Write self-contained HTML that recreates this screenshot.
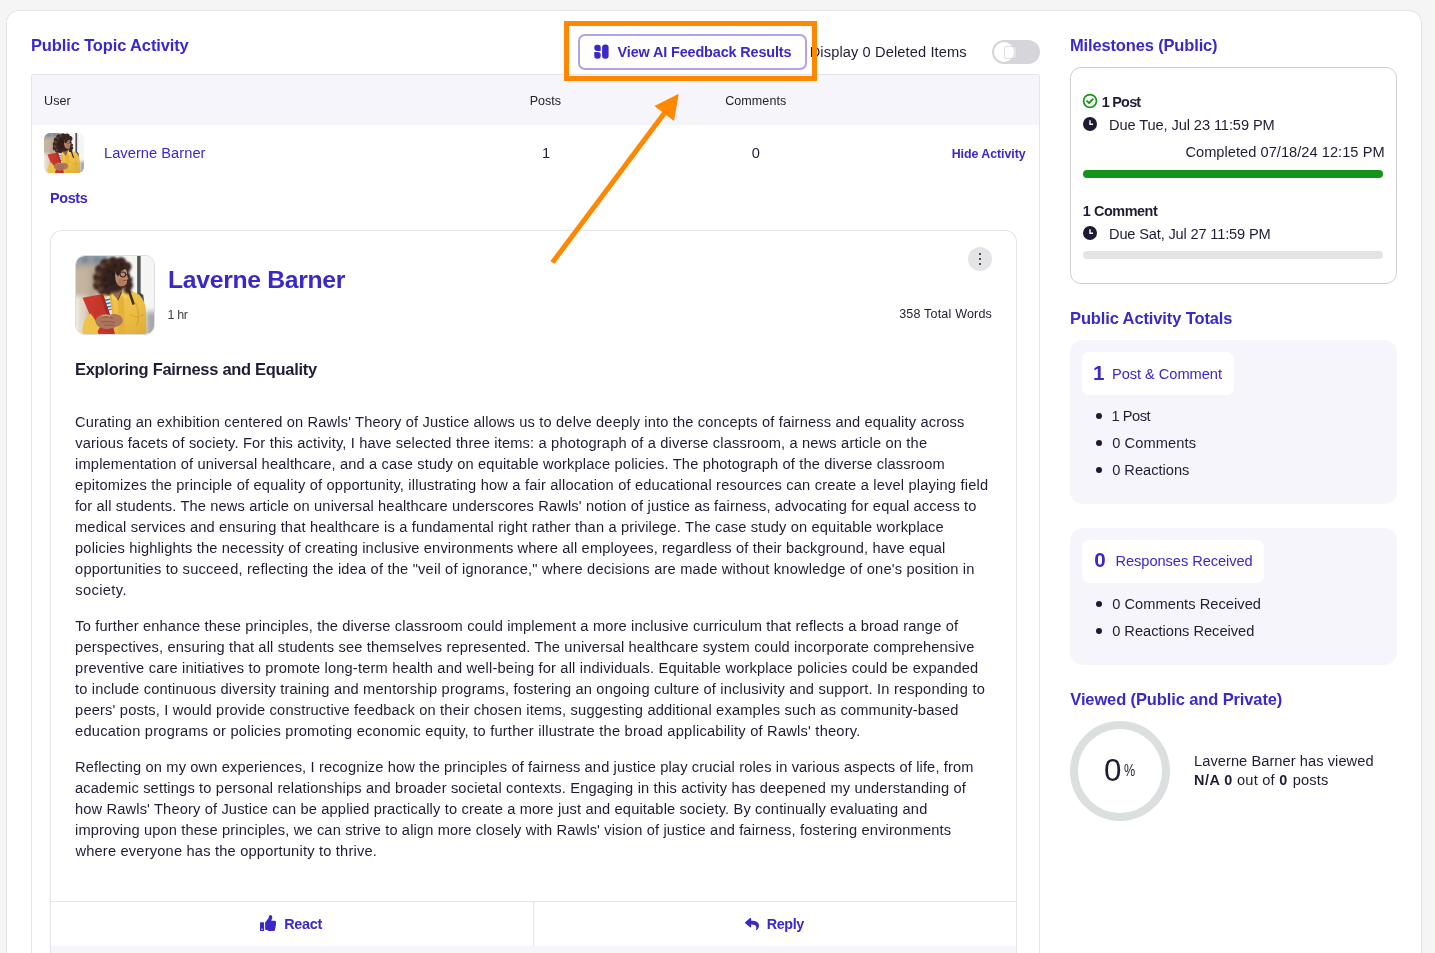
<!DOCTYPE html>
<html lang="en"><head><meta charset="utf-8"><title>Public Topic Activity</title>
<style>
html,body{margin:0;padding:0}
html{overflow:hidden;width:1435px;height:953px}
body{width:1435px;height:953px;overflow:hidden;position:relative;background:#f5f5f5;font-family:"Liberation Sans",sans-serif;color:#1f1d36}
.abs{position:absolute;display:block}
.t{position:absolute;white-space:pre;margin:0;padding:0;font-weight:400;font-style:normal;text-decoration:none;list-style:none;display:block}
.txt h2,.txt h3,.txt h4,.txt p,.txt ul,.txt li,.txt header,.txt footer{margin:0;padding:0;font:inherit;list-style:none}
.txt button{all:unset}
.txt{position:absolute;left:0;top:0;width:1435px;height:953px;z-index:2;will-change:transform}
.card{position:absolute;left:6px;top:10px;width:1416px;height:943px;background:#fff;border:1px solid #e4e4e8;border-bottom:0;border-radius:13px 13px 0 0;box-sizing:border-box}
.btn{position:absolute;left:578px;top:34px;width:228.6px;height:36px;box-sizing:border-box;border:2px solid #aca3e8;border-radius:7px;background:#fff}
.toggle{position:absolute;left:992px;top:40px;width:48px;height:24px;border-radius:12px;background:#d6d5da}
.toggle i{position:absolute;left:2px;top:2px;width:20px;height:20px;border-radius:50%;background:#fff}
.toggle b{position:absolute;left:12px;top:6px;width:13px;height:13px;border:1px solid rgba(190,190,198,.45);border-radius:2.5px;background:rgba(250,250,250,.35);box-sizing:border-box}
.table{position:absolute;left:31px;top:74px;width:1009px;height:879px;box-sizing:border-box;border:1px solid #e4e4ea;border-bottom:0;border-radius:3px 3px 0 0;background:#fff}
.thead{position:absolute;left:32px;top:75px;width:1007px;height:49.6px;background:#f6f5fc}
.post{position:absolute;left:50px;top:230px;width:967px;height:723px;box-sizing:border-box;border:1px solid #e3e3e7;border-bottom:0;border-radius:12px 12px 0 0;background:#fff}
.postfoot{position:absolute;left:51px;top:945.6px;width:965px;height:7.4px;background:#f6f5fc}
.hline{position:absolute;left:51px;top:901px;width:965px;height:1px;background:#e4e4e7}
.vline{position:absolute;left:533px;top:901px;width:1px;height:45px;background:#e4e4e7}
.avb{position:absolute;left:75px;top:255px;width:80px;height:80px;box-sizing:border-box;border:1px solid #dcdce2;border-radius:10px;background:#fff}
.kebab{position:absolute;left:968px;top:247px;width:24px;height:24px;border-radius:50%;background:#e4e4e7}
.kebab i{position:absolute;left:10.8px;width:2.4px;height:2.4px;border-radius:50%;background:#1d1a33}
.msbox{position:absolute;left:1070px;top:67px;width:327px;height:216.5px;box-sizing:border-box;border:1px solid #cfcfd6;border-radius:11px;background:#fff}
.bar{position:absolute;left:1083px;width:300px;height:8px;border-radius:4px}
.lav{position:absolute;left:1070px;width:327px;background:#f6f5fc;border-radius:13px}
.chip{position:absolute;left:1082px;height:42.6px;background:#fff;border-radius:7px}
.dot{position:absolute;left:1095.6px;width:6px;height:6px;border-radius:50%;background:#1d1a33}
.ring{position:absolute;left:1070px;top:721px;width:100px;height:100px;box-sizing:border-box;border:8px solid #dcdfdf;border-radius:50%}
</style></head>
<body>
<svg width="0" height="0" style="position:absolute"><symbol id="av" viewBox="0 0 80 80">
<defs><filter id="bl" x="-10%" y="-10%" width="120%" height="120%"><feGaussianBlur stdDeviation="0.5"/></filter>
<filter id="bl2" x="-10%" y="-10%" width="120%" height="120%"><feGaussianBlur stdDeviation="2"/></filter>
<filter id="bl3" x="-10%" y="-10%" width="120%" height="120%"><feGaussianBlur stdDeviation="1"/></filter>
<linearGradient id="sh" x1="0" y1="0" x2="1" y2="1"><stop offset="0" stop-color="#f4c94f"/><stop offset=".6" stop-color="#eebf45"/><stop offset="1" stop-color="#dba935"/></linearGradient>
<linearGradient id="rd" x1="0" y1="0" x2="1" y2="0"><stop offset="0" stop-color="#d03b2f"/><stop offset="1" stop-color="#bd3028"/></linearGradient>
<radialGradient id="hr" cx=".55" cy=".5" r=".6"><stop offset="0" stop-color="#2a1d1a"/><stop offset=".7" stop-color="#3a2820"/><stop offset="1" stop-color="#5e4133"/></radialGradient>
<clipPath id="avc"><rect x="0" y="0" width="80" height="80" rx="9"/></clipPath></defs>
<g clip-path="url(#avc)">
<rect width="80" height="80" fill="#f5f5f4"/>
<g filter="url(#bl2)">
<rect x="-6" y="-6" width="29" height="92" fill="#c4b5a0"/>
<rect x="-6" y="-6" width="40" height="15.5" fill="#939daa"/>
<rect x="7" y="1" width="5" height="6" fill="#6f7986"/><rect x="19" y="1" width="5" height="6" fill="#6f7986"/>
<rect x="-6" y="9" width="30" height="5" fill="#b9ab97"/>
<rect x="13" y="14" width="10" height="28" fill="#b5a692"/>
<rect x="-6" y="41" width="17" height="45" fill="#e2d8c8"/>
<rect x="-6" y="41" width="8" height="45" fill="#f3efe8"/>
<rect x="72" y="57" width="14" height="30" fill="#a6aaae"/>
<rect x="72" y="55" width="14" height="3" fill="#d6d8da"/>
</g>
<g filter="url(#bl)">
<rect x="62.7" y="-2" width="3.6" height="42" fill="#55545b"/>
<path d="M64.5 37 L69 40 L70 48 L65.5 47 Z" fill="#47474e"/>
<path d="M7 84 C6 70 9 62 16 58 L24 47 L29 39 L40 34 L52 34 C58 36 63 38 65 40 C70 45 72 52 72 60 L72.3 84 Z" fill="url(#sh)"/>
<path d="M43 42 L49 40 L50.5 84 L43.5 84 Z" fill="#e1ad36" opacity=".75"/>
<path d="M61 48 C65 56 65 66 62 71 M55 60 C60 63 66 63 70 60 M12 66 C16 64 20 66 22 70" fill="none" stroke="#d39c2b" stroke-width="1.4" opacity=".65"/>
<path d="M29 39 L36 36 L42 45 L35 44 Z M52 34 L57 38 L50 44 L47 40 Z" fill="#f6cf5c"/>
<path d="M54.6 36.5 L58.8 48.7" stroke="#3a3231" stroke-width="2.6" stroke-linecap="round"/>
<path d="M36 30 L47 29 L47 38 L43 45 L37 38 Z" fill="#9c6a52"/>
<path d="M46.5 37 L43 45.5" stroke="#3b2f2c" stroke-width=".8"/>
</g>
<g filter="url(#bl3)">
<g fill="url(#hr)">
<ellipse cx="38" cy="20" rx="17" ry="17.5"/>
</g>
<g fill="#3a2820">
<circle cx="25" cy="14" r="5.5"/><circle cx="30" cy="8" r="5.5"/><circle cx="38" cy="5.5" r="5"/><circle cx="46" cy="6.5" r="5.5"/><circle cx="52" cy="11" r="5"/>
<circle cx="22.5" cy="22" r="5"/><circle cx="23" cy="30" r="5.5"/><circle cx="27" cy="35" r="5"/><circle cx="33" cy="36.5" r="4"/>
<circle cx="54.5" cy="30" r="4"/><circle cx="53" cy="35" r="3.6"/><circle cx="55.5" cy="24" r="2.6"/>
</g>
<g fill="#6a4937" opacity=".75"><circle cx="23" cy="18" r="3"/><circle cx="22" cy="27" r="3"/><circle cx="27" cy="10" r="2.6"/><circle cx="25" cy="34" r="2.6"/><circle cx="33" cy="6" r="2"/></g>
</g>
<g filter="url(#bl)">
<g fill="#2a1d1a" opacity=".8"><circle cx="34" cy="16" r="2.4"/><circle cx="30" cy="24" r="2.4"/><circle cx="36" cy="28" r="2.4"/><circle cx="40" cy="10" r="2.2"/><circle cx="31" cy="31" r="2"/><circle cx="47" cy="9" r="2"/></g>
<path d="M41 15 C43 10.5 50.5 10.5 52 15.5 L52.6 20.5 L53.8 23.5 L52.4 24.3 L52 28 C50 31.5 45.5 32 43 29.5 C40 26 39.5 19 41 15 Z" fill="#c08a6c"/>
<path d="M46 22 C48 25 50 27 52 27.5 L52 28 C50 31.5 45.5 32 43 29.5 C42 27 43 24 46 22 Z" fill="#b27b60"/>
<path d="M40.5 16 C42 11 48 9.5 52 13 C48 13.5 45 16 43.5 21 C42 20 40.5 18 40.5 16 Z" fill="#33231e"/>
<path d="M41 18 L45 18.3 M45 18.3 C45 22.2 50.6 22.6 51 19 C51 15.8 45 15.6 45 18.3 M51 19 L54.6 19.4 M54.6 19.4 C54.8 21 54 22 53 22" fill="none" stroke="#2b2322" stroke-width="1.1"/>
<path d="M48.4 24.6 C49.4 25.2 50.8 25.1 51.8 24.4" stroke="#a2423f" stroke-width="1.1" fill="none"/>
<path d="M29 42 L34.5 41 L37.4 60.5 L33.5 62 Z" fill="#e8ecf1"/>
<path d="M29.8 45.4 L35 44.4 M30.6 49 L35.6 48 M31.4 52.6 L36.2 51.6" stroke="#3577bd" stroke-width="1.5"/>
<path d="M31.8 55.6 L36.6 54.6" stroke="#c9372f" stroke-width="1.2"/>
<path d="M34.5 41 L36.6 41 L39.4 60.5 L37.4 60.5 Z" fill="#e9b52c"/>
<path d="M6.7 42.9 L27.7 39 L34.9 60.5 L41 84 L25 84 L16 64.7 Z" fill="url(#rd)"/>
<path d="M24.6 39.6 L27.7 39 L34.9 60.5 L32 61 Z" fill="#a92a23"/>
<path d="M7 84 C6 72 9 63 15 59 C18 63 21 68 24.5 73 C22 77 21 80 21 84 Z" fill="#efc248"/>
<path d="M20 66 C22 60 29 58.5 34 60.5 C39 58 47.5 60 48 66 C48 71 41 74 32 75 C25 75 19.5 71 20 66 Z" fill="#ad765e"/>
<path d="M27 63.5 C31 61.5 36 62.5 38 64.5 M26 67.5 C31 66.5 37 67.5 40 68.5 M29 71 C33 70.5 37 71 39 71.6" fill="none" stroke="#8a5644" stroke-width=".9"/>
<path d="M27 61.5 C30 60.3 33 60.6 35 61.6" stroke="#d2a088" stroke-width="1.3" fill="none"/>
</g>
</g>
</symbol></svg>

<div class="card"></div>
<!-- left column : topic activity -->
<div class="btn"></div>
<svg class="abs" style="left:594px;top:44px" width="15" height="16" viewBox="0 0 15 16"><path d="M0.3 3.6 a2.8 2.8 0 0 1 2.8 -2.8 h0.8 a2.8 2.8 0 0 1 2.8 2.8 v3.3 h-3.6 a2.8 2.8 0 0 1 -2.8 -2.8 z" fill="#3a28c8"/><path d="M0.3 7.9 h3.6 a2.8 2.8 0 0 1 2.8 2.8 v1.3 a2.8 2.8 0 0 1 -2.8 2.8 h-0.8 a2.8 2.8 0 0 1 -2.8 -2.8 z" fill="#3a28c8"/><rect x="8.1" y="0.5" width="6.5" height="14.3" rx="3" fill="#3a28c8"/></svg>
<div class="toggle"><i></i><b></b></div>
<div class="table"></div>
<div class="thead"></div>
<svg class="abs" style="left:44px;top:133px;border-radius:6px" width="40" height="40"><use href="#av"/></svg>
<div class="post"></div>
<div class="postfoot"></div>
<div class="hline"></div><div class="vline"></div>
<div class="avb"></div>
<svg class="abs" style="left:76px;top:256px" width="78" height="78"><use href="#av"/></svg>
<div class="kebab"><i style="top:6px"></i><i style="top:11px"></i><i style="top:16px"></i></div>
<svg class="abs" style="left:260px;top:914.6px" width="16.4" height="16.4" viewBox="0 0 512 512"><path fill="#3a28c8" d="M104 224H24c-13.255 0-24 10.745-24 24v240c0 13.255 10.745 24 24 24h80c13.255 0 24-10.745 24-24V248c0-13.255-10.745-24-24-24zM64 472c-13.255 0-24-10.745-24-24s10.745-24 24-24 24 10.745 24 24-10.745 24-24 24zM384 81.452c0 42.416-25.97 66.208-33.277 94.548h101.723c33.397 0 59.397 27.746 59.553 58.098.084 17.938-7.546 37.249-19.439 49.197l-.11.11c9.836 23.337 8.237 56.037-9.308 79.469 8.681 25.895-.069 57.704-16.382 74.757 4.298 17.598 2.244 32.575-6.148 44.632C440.202 511.587 389.616 512 346.839 512l-2.845-.001c-48.287-.017-87.806-17.598-119.56-31.725-15.957-7.099-36.821-15.887-52.651-16.178-6.54-.12-11.783-5.457-11.783-11.998v-213.77c0-3.2 1.282-6.271 3.558-8.521 39.614-39.144 56.648-80.587 89.117-113.111 14.804-14.832 20.188-37.236 25.393-58.902C282.515 39.293 291.817 0 312 0c24 0 72 8 72 81.452z"/></svg>
<svg class="abs" style="left:745px;top:916.8px" width="14" height="14" viewBox="0 0 512 512"><path fill="#3a28c8" d="M8.309 189.836L184.313 37.851C199.719 24.546 224 35.347 224 56.015v80.053c160.629 1.839 288 34.032 288 186.258 0 61.441-39.581 122.309-83.333 154.132-13.653 9.931-33.111-2.533-28.077-18.631 45.344-145.012-21.507-183.51-176.59-185.742V360c0 20.7-24.3 31.453-39.687 18.164l-176.004-152c-11.071-9.562-11.086-26.753 0-36.328z"/></svg>
<!-- right column -->
<div class="msbox"></div>
<svg class="abs" style="left:1082px;top:92.8px" width="16" height="16" viewBox="0 0 16 16"><circle cx="8" cy="8" r="6.4" fill="none" stroke="#15961a" stroke-width="1.7"/><path d="M5.1 8.1 L7.1 10 L10.9 6.2" fill="none" stroke="#15961a" stroke-width="1.9" stroke-linecap="round" stroke-linejoin="round"/></svg>
<svg class="abs" style="left:1083px;top:117px" width="14" height="14" viewBox="0 0 14 14"><circle cx="7" cy="7" r="7" fill="#1d1a33"/><path d="M7 3.2 V7.3 H10" fill="none" stroke="#fff" stroke-width="1.4"/></svg>
<svg class="abs" style="left:1083px;top:226px" width="14" height="14" viewBox="0 0 14 14"><circle cx="7" cy="7" r="7" fill="#1d1a33"/><path d="M7 3.2 V7.3 H10" fill="none" stroke="#fff" stroke-width="1.4"/></svg>
<div class="bar" style="top:170px;background:#14921a"></div>
<div class="bar" style="top:251px;background:#e4e4e7"></div>
<div class="lav" style="top:340px;height:163.5px"></div>
<div class="lav" style="top:528px;height:136.5px"></div>
<div class="chip" style="top:352px;width:152px"></div>
<div class="chip" style="top:540px;width:182px"></div>
<i class="dot" style="top:413.4px"></i><i class="dot" style="top:440.4px"></i><i class="dot" style="top:467.4px"></i>
<i class="dot" style="top:601.4px"></i><i class="dot" style="top:628.4px"></i>
<div class="ring"></div>

<div class="txt">
<main>
<section class="activity" aria-label="Public Topic Activity">
<header><h2 class="t" style="left:31.0px;top:35px;font-size:16.48px;line-height:20px;letter-spacing:-0.120px;color:#3a28c8;font-weight:700;">Public Topic Activity</h2>
<button type="button"><span class="t" style="left:617.6px;top:43px;font-size:14.42px;line-height:18px;letter-spacing:-0.131px;color:#3a28c8;font-weight:700;">View AI Feedback Results</span></button>
<label><span class="t" style="left:809.7px;top:43px;font-size:14.63px;line-height:18px;letter-spacing:0.114px;color:#1f1d36;">Display 0 Deleted Items</span></label></header>

<div role="table"><div role="row"><span class="t" style="left:44.1px;top:93px;font-size:12.54px;line-height:16px;letter-spacing:0.064px;color:#23232b;">User</span>
<span class="t" style="left:529.7px;top:93px;font-size:12.54px;line-height:16px;letter-spacing:-0.015px;color:#23232b;">Posts</span>
<span class="t" style="left:725.2px;top:93px;font-size:12.54px;line-height:16px;letter-spacing:0.066px;color:#23232b;">Comments</span></div>

<div role="row"><a class="t" style="left:104.0px;top:144px;font-size:14.63px;line-height:18px;letter-spacing:0.050px;color:#3a28c8;">Laverne Barner</a>
<span class="t" style="left:542.1px;top:144px;font-size:14.63px;line-height:18px;letter-spacing:0.000px;color:#1f1d36;">1</span>
<span class="t" style="left:751.7px;top:144px;font-size:14.63px;line-height:18px;letter-spacing:0.000px;color:#1f1d36;">0</span>
<a class="t" style="left:951.7px;top:146px;font-size:12.36px;line-height:16px;letter-spacing:-0.037px;color:#3a28c8;font-weight:700;">Hide Activity</a></div></div>
<h3 class="t" style="left:50.0px;top:189px;font-size:14.42px;line-height:18px;letter-spacing:-0.377px;color:#3a28c8;font-weight:700;">Posts</h3>

<article class="postbody"><header><h3 class="t" style="left:168.1px;top:265px;font-size:24.72px;line-height:29px;letter-spacing:-0.323px;color:#3a28c8;font-weight:700;">Laverne Barner</h3>
<time class="t" style="left:167.6px;top:307px;font-size:12.54px;line-height:16px;letter-spacing:-0.417px;color:#3f3f46;">1 hr</time>
<span class="t" style="left:899.2px;top:306px;font-size:12.54px;line-height:16px;letter-spacing:0.183px;color:#1f1d36;">358 Total Words</span></header>
<h4 class="t" style="left:75.0px;top:359px;font-size:16.48px;line-height:20px;letter-spacing:-0.287px;color:#1f1d36;font-weight:700;">Exploring Fairness and Equality</h4>

<p><span class="t" style="left:75.0px;top:413px;font-size:14.63px;line-height:18px;letter-spacing:0.163px;color:#1f1d36;">Curating an exhibition centered on Rawls&#x27; Theory of Justice allows us to delve deeply into the concepts of fairness and equality across</span>
<span class="t" style="left:75.3px;top:434px;font-size:14.63px;line-height:18px;letter-spacing:0.169px;color:#1f1d36;">various facets of society. For this activity, I have selected three items: a photograph of a diverse classroom, a news article on the</span>
<span class="t" style="left:75.1px;top:455px;font-size:14.63px;line-height:18px;letter-spacing:0.158px;color:#1f1d36;">implementation of universal healthcare, and a case study on equitable workplace policies. The photograph of the diverse classroom</span>
<span class="t" style="left:75.1px;top:476px;font-size:14.63px;line-height:18px;letter-spacing:0.188px;color:#1f1d36;">epitomizes the principle of equality of opportunity, illustrating how a fair allocation of educational resources can create a level playing field</span>
<span class="t" style="left:74.9px;top:497px;font-size:14.63px;line-height:18px;letter-spacing:0.141px;color:#1f1d36;">for all students. The news article on universal healthcare underscores Rawls&#x27; notion of justice as fairness, advocating for equal access to</span>
<span class="t" style="left:75.0px;top:518px;font-size:14.63px;line-height:18px;letter-spacing:0.162px;color:#1f1d36;">medical services and ensuring that healthcare is a fundamental right rather than a privilege. The case study on equitable workplace</span>
<span class="t" style="left:75.1px;top:539px;font-size:14.63px;line-height:18px;letter-spacing:0.145px;color:#1f1d36;">policies highlights the necessity of creating inclusive environments where all employees, regardless of their background, have equal</span>
<span class="t" style="left:75.1px;top:560px;font-size:14.63px;line-height:18px;letter-spacing:0.203px;color:#1f1d36;">opportunities to succeed, reflecting the idea of the &quot;veil of ignorance,&quot; where decisions are made without knowledge of one&#x27;s position in</span>
<span class="t" style="left:75.2px;top:581px;font-size:14.63px;line-height:18px;letter-spacing:0.394px;color:#1f1d36;">society.</span></p>

<p><span class="t" style="left:75.3px;top:617px;font-size:14.63px;line-height:18px;letter-spacing:0.166px;color:#1f1d36;">To further enhance these principles, the diverse classroom could implement a more inclusive curriculum that reflects a broad range of</span>
<span class="t" style="left:75.1px;top:638px;font-size:14.63px;line-height:18px;letter-spacing:0.158px;color:#1f1d36;">perspectives, ensuring that all students see themselves represented. The universal healthcare system could incorporate comprehensive</span>
<span class="t" style="left:75.1px;top:659px;font-size:14.63px;line-height:18px;letter-spacing:0.183px;color:#1f1d36;">preventive care initiatives to promote long-term health and well-being for all individuals. Equitable workplace policies could be expanded</span>
<span class="t" style="left:74.9px;top:680px;font-size:14.63px;line-height:18px;letter-spacing:0.190px;color:#1f1d36;">to include continuous diversity training and mentorship programs, fostering an ongoing culture of inclusivity and support. In responding to</span>
<span class="t" style="left:75.1px;top:701px;font-size:14.63px;line-height:18px;letter-spacing:0.185px;color:#1f1d36;">peers&#x27; posts, I would provide constructive feedback on their chosen items, suggesting additional examples such as community-based</span>
<span class="t" style="left:75.1px;top:722px;font-size:14.63px;line-height:18px;letter-spacing:0.225px;color:#1f1d36;">education programs or policies promoting economic equity, to further illustrate the broad applicability of Rawls&#x27; theory.</span></p>

<p><span class="t" style="left:75.0px;top:758px;font-size:14.63px;line-height:18px;letter-spacing:0.136px;color:#1f1d36;">Reflecting on my own experiences, I recognize how the principles of fairness and justice play crucial roles in various aspects of life, from</span>
<span class="t" style="left:75.0px;top:779px;font-size:14.63px;line-height:18px;letter-spacing:0.165px;color:#1f1d36;">academic settings to personal relationships and broader societal contexts. Engaging in this activity has deepened my understanding of</span>
<span class="t" style="left:75.0px;top:800px;font-size:14.63px;line-height:18px;letter-spacing:0.155px;color:#1f1d36;">how Rawls&#x27; Theory of Justice can be applied practically to create a more just and equitable society. By continually evaluating and</span>
<span class="t" style="left:75.1px;top:821px;font-size:14.63px;line-height:18px;letter-spacing:0.146px;color:#1f1d36;">improving upon these principles, we can strive to align more closely with Rawls&#x27; vision of justice and fairness, fostering environments</span>
<span class="t" style="left:75.4px;top:842px;font-size:14.63px;line-height:18px;letter-spacing:0.199px;color:#1f1d36;">where everyone has the opportunity to thrive.</span></p>

<footer><button type="button"><span class="t" style="left:284.2px;top:915px;font-size:14.42px;line-height:18px;letter-spacing:-0.266px;color:#3a28c8;font-weight:700;">React</span></button>
<button type="button"><span class="t" style="left:766.7px;top:915px;font-size:14.42px;line-height:18px;letter-spacing:-0.399px;color:#3a28c8;font-weight:700;">Reply</span></button></footer></article>
</section>

<aside>
<section aria-label="Milestones"><h2 class="t" style="left:1070.0px;top:35px;font-size:16.48px;line-height:20px;letter-spacing:-0.139px;color:#3a28c8;font-weight:700;">Milestones (Public)</h2>
<ul><li><strong class="t" style="left:1101.8px;top:93px;font-size:14.42px;line-height:18px;letter-spacing:-0.773px;color:#1f1d36;font-weight:700;">1 Post</strong>
<span class="t" style="left:1109.0px;top:116px;font-size:14.63px;line-height:18px;letter-spacing:-0.100px;color:#1f1d36;">Due Tue, Jul 23 11:59 PM</span>
<span class="t" style="left:1185.4px;top:143px;font-size:14.63px;line-height:18px;letter-spacing:0.032px;color:#1f1d36;">Completed 07/18/24 12:15 PM</span></li>
<li><strong class="t" style="left:1082.8px;top:202px;font-size:14.42px;line-height:18px;letter-spacing:-0.434px;color:#1f1d36;font-weight:700;">1 Comment</strong>
<span class="t" style="left:1109.0px;top:225px;font-size:14.63px;line-height:18px;letter-spacing:-0.168px;color:#1f1d36;">Due Sat, Jul 27 11:59 PM</span></li></ul></section>

<section aria-label="Public Activity Totals"><h2 class="t" style="left:1070.0px;top:308px;font-size:16.48px;line-height:20px;letter-spacing:-0.108px;color:#3a28c8;font-weight:700;">Public Activity Totals</h2>
<div><strong class="t" style="left:1093.1px;top:360px;font-size:20.60px;line-height:25px;letter-spacing:0.000px;color:#3a28c8;font-weight:700;">1</strong>
<span class="t" style="left:1112.0px;top:365px;font-size:14.63px;line-height:18px;letter-spacing:-0.045px;color:#3a28c8;">Post &amp; Comment</span>
<ul><li class="t" style="left:1111.5px;top:407px;font-size:14.63px;line-height:18px;letter-spacing:-0.488px;color:#1f1d36;">1 Post</li>
<li class="t" style="left:1112.2px;top:434px;font-size:14.63px;line-height:18px;letter-spacing:0.107px;color:#1f1d36;">0 Comments</li>
<li class="t" style="left:1112.2px;top:461px;font-size:14.63px;line-height:18px;letter-spacing:-0.008px;color:#1f1d36;">0 Reactions</li></ul></div>
<div><strong class="t" style="left:1094.3px;top:547px;font-size:20.60px;line-height:25px;letter-spacing:0.000px;color:#3a28c8;font-weight:700;">0</strong>
<span class="t" style="left:1115.5px;top:552px;font-size:14.63px;line-height:18px;letter-spacing:-0.057px;color:#3a28c8;">Responses Received</span>
<ul><li class="t" style="left:1112.2px;top:595px;font-size:14.63px;line-height:18px;letter-spacing:0.049px;color:#1f1d36;">0 Comments Received</li>
<li class="t" style="left:1112.2px;top:622px;font-size:14.63px;line-height:18px;letter-spacing:-0.005px;color:#1f1d36;">0 Reactions Received</li></ul></div></section>

<section aria-label="Viewed"><h2 class="t" style="left:1070.3px;top:689px;font-size:16.48px;line-height:20px;letter-spacing:-0.106px;color:#3a28c8;font-weight:700;">Viewed (Public and Private)</h2>
<span class="t" style="left:1104.0px;top:752px;font-size:31.35px;line-height:37px;letter-spacing:0.000px;color:#1f1d36;">0</span><span class="t" style="left:1124.4px;top:760.6px;font-size:16.6px;line-height:20px;transform:scaleX(.76);transform-origin:0 0">%</span>
<p><span class="t" style="left:1194.0px;top:752px;font-size:14.63px;line-height:18px;letter-spacing:0.062px;color:#1f1d36;">Laverne Barner has viewed</span>
<b class="t" style="left:1194.0px;top:771px;font-size:14.42px;line-height:18px;letter-spacing:0.519px;color:#1f1d36;font-weight:700;">N/A 0</b>
<span class="t" style="left:1232.6px;top:771px;font-size:14.63px;line-height:18px;letter-spacing:0.236px;color:#1f1d36;"> out of </span>
<b class="t" style="left:1279.3px;top:771px;font-size:14.42px;line-height:18px;letter-spacing:0.000px;color:#1f1d36;font-weight:700;">0</b>
<span class="t" style="left:1288.5px;top:771px;font-size:14.63px;line-height:18px;letter-spacing:0.167px;color:#1f1d36;"> posts</span></p></section>
</aside>
</main>
</div>

<!-- annotation: highlight box + arrow -->
<svg class="abs" style="left:0;top:0;z-index:5" width="1435" height="953" viewBox="0 0 1435 953">
<rect x="566.5" y="23.5" width="248" height="55" fill="none" stroke="#ff8800" stroke-width="5"/>
<line x1="552.4" y1="262.6" x2="666" y2="110.9" stroke="#ff8800" stroke-width="5"/>
<polygon points="678.8,93.8 654.4,106 674,121" fill="#ff8800"/>
</svg>
</body></html>
